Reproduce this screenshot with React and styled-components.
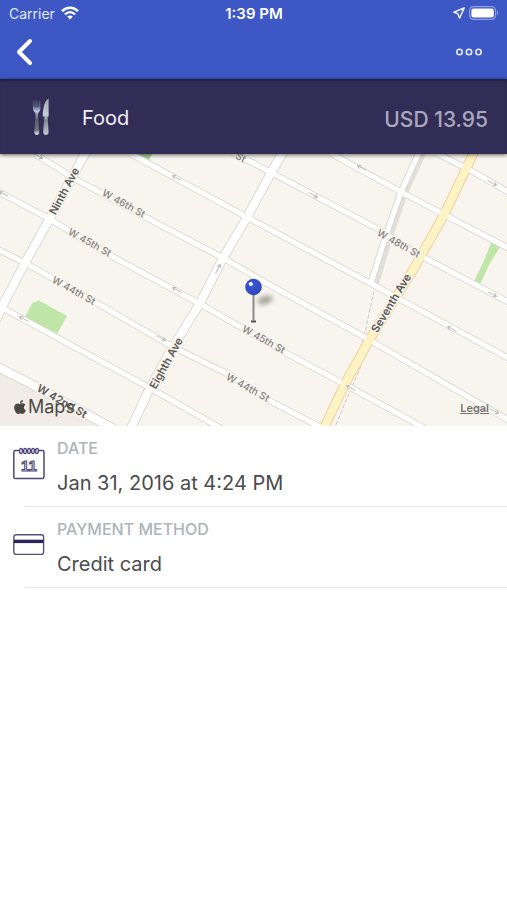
import React from "react";
import styled, { createGlobalStyle } from "styled-components";
import { FaApple } from "react-icons/fa";

const DETAILS = [
  { label: "Date", value: "Jan 31, 2016 at 4:24 PM", Icon: CalendarIcon },
  { label: "Payment method", value: "Credit card", Icon: CardIcon },
];

const STREETS = [
  "M438 154 L470 170 L510 193",
  "M332 154 L401 192 L445 215 L510 249",
  "M233 153 L253 163 L378 229 L423 257 L510 303",
  "M131 154 L243 215 L370 283 L510 359",
  "M35 154 L77 180 L147 218 L223 258 L268 284 L366 338 L510 421",
  "M-3 191 L48 218 L113 257 L202 305 L286 353 L346 385 L426 429",
  "M-3 249 L25 263 L97 303 L173 347 L230 375 L270 401 L324 429",
  "M-3 305 L150 388 L222 429",
];

const AVENUES = [
  "M86 152 L50 218 L25 263 L3 305 L-6 324",
  "M283 152 L271 173 L246 219 L223 258 L200 303 L173 347 L150 388 L130 430",
  "M-4 366 L33 385 L114 429",
];

const BROADWAY = "M420 150 L401 192 L385 238 L371 283";
const SEVENTH = "M475 150 L445 213 L413 270 L371 337 L346 382 L323 430";

const STREET_LABELS = [
  { x: 124, y: 203, text: "W 46th St" },
  { x: 90, y: 242, text: "W 45th St" },
  { x: 74, y: 290, text: "W 44th St" },
  { x: 264, y: 339, text: "W 45th St" },
  { x: 248, y: 387, text: "W 44th St" },
  { x: 399, y: 243, text: "W 48th St" },
  { x: 241, y: 157, text: "St" },
];

const AVENUE_LABELS = [
  { x: 64, y: 191, angle: -62, text: "Ninth Ave" },
  { x: 166, y: 363, angle: -61, text: "Eighth Ave" },
  { x: 391, y: 303, angle: -59, text: "Seventh Ave" },
  { x: 62, y: 401, angle: 30, text: "W 42nd St" },
];

// one way markers, flip points them to the right
const ARROWS = [
  { x: 177, y: 178 },
  { x: 362, y: 168 },
  { x: 177, y: 290 },
  { x: 24, y: 319 },
  { x: 452, y: 329 },
  { x: 4, y: 194 },
  { x: 38, y: 156, flip: true },
  { x: 313, y: 195, flip: true },
  { x: 492, y: 183, flip: true },
  { x: 161, y: 338, flip: true },
  { x: 351, y: 388 },
  { x: 492, y: 294, flip: true },
  { x: 494, y: 411, flip: true },
];

export default function App() {
  return (
    <>
      <GlobalStyle />
      <Header>
        <StatusBar>
          <Carrier>
            Carrier
            <WifiIcon />
          </Carrier>
          <Clock>1:39 PM</Clock>
          <StatusIcons>
            <LocationIcon />
            <BatteryIcon />
          </StatusIcons>
        </StatusBar>
        <NavBar>
          <NavButton type="button" aria-label="Back">
            <svg width="17" height="28" viewBox="0 0 17 28" fill="none">
              <path
                d="M14 3 L3 14 L14 25"
                stroke="#fff"
                strokeWidth="4"
                strokeLinecap="round"
                strokeLinejoin="round"
              />
            </svg>
          </NavButton>
          <NavButton type="button" aria-label="More options">
            <svg width="28" height="8" viewBox="0 0 28 8" fill="none">
              <g stroke="#e3e9ff" strokeWidth="1.6">
                <circle cx="4.5" cy="4" r="2.7" />
                <circle cx="14" cy="4" r="2.7" />
                <circle cx="23.5" cy="4" r="2.7" />
              </g>
            </svg>
          </NavButton>
        </NavBar>
      </Header>
      <main>
        <Summary>
          <CutleryIcon />
          <Category>Food</Category>
          <Amount>USD 13.95</Amount>
        </Summary>
        <MapPanel>
          <StreetMap />
          <MapBrand>
            <FaApple size={16} />
            Maps
          </MapBrand>
          <LegalLink href="#legal">Legal</LegalLink>
        </MapPanel>
        {DETAILS.map(({ label, value, Icon }) => (
          <React.Fragment key={label}>
            <DetailRow>
              <Icon />
              <div>
                <DetailLabel>{label}</DetailLabel>
                <DetailValue>{value}</DetailValue>
              </div>
            </DetailRow>
            <Divider />
          </React.Fragment>
        ))}
      </main>
    </>
  );
}

function StreetMap() {
  return (
    <MapCanvas viewBox="0 154 507 272" preserveAspectRatio="xMidYMid slice">
      <defs>
        <radialGradient id="pinHead" cx="0.4" cy="0.35" r="0.7">
          <stop offset="0" stopColor="#3f5ad2" />
          <stop offset="1" stopColor="#2b46bd" />
        </radialGradient>
        <filter id="soft" x="-50%" y="-50%" width="200%" height="200%">
          <feGaussianBlur stdDeviation="2.6" />
        </filter>
      </defs>
      <rect x="-10" y="140" width="530" height="300" fill="#f8f5ee" />
      <path d="M-4 366 L33 385 L114 429 L-4 429 Z" fill="#f1ede6" />
      <path d="M25 317 L33 302 L36 302 L38 300 L67 316 L57 334 Z" fill="#bfe5a8" />
      <path d="M491 243 L500 247 L490 263 L480 284 L474 281 L483 263 Z" fill="#bfe5a8" />
      <path d="M138 154 L152 154 L149 160 Z" fill="#a9cf92" />

      <g fill="none" stroke="#c9c7c2" strokeWidth="1" strokeDasharray="4 2">
        <path d="M374 291 L365 332 L361 345" />
        <path d="M361 366 L348 396 L335 427" />
      </g>
      <path d="M425 150 L405 194 L390 238 L376 285" fill="none" stroke="#e0ded8" strokeWidth="5" />

      <g fill="none" strokeLinejoin="round">
        <g stroke="#dcdad5" strokeWidth="7">
          {STREETS.map((d) => (
            <path key={d} d={d} />
          ))}
          <path d={BROADWAY} />
        </g>
        <g stroke="#dcdad5" strokeWidth="10">
          {AVENUES.map((d) => (
            <path key={d} d={d} />
          ))}
        </g>
        <path d={SEVENTH} stroke="#f5cfa0" strokeWidth="10" />
        <g stroke="#fff" strokeWidth="5">
          {STREETS.map((d) => (
            <path key={d} d={d} />
          ))}
          <path d={BROADWAY} />
        </g>
        <g stroke="#fff" strokeWidth="8">
          {AVENUES.map((d) => (
            <path key={d} d={d} />
          ))}
        </g>
        <path d={SEVENTH} stroke="#fdf3c4" strokeWidth="8" />
      </g>

      <g fill="none" stroke="#bab8b4" strokeWidth="1">
        {ARROWS.map(({ x, y, flip }) => (
          <path
            key={`${x}-${y}`}
            d="M5 0 H-5 M-2 -2 L-5 0 L-2 2"
            transform={`translate(${x} ${y}) rotate(${flip ? 208 : 28})`}
          />
        ))}
        <path d="M0 5 V-5 M-2 -2 L0 -5 L2 -2" transform="translate(218 269) rotate(28)" />
      </g>

      {STREET_LABELS.map(({ x, y, text }) => (
        <StreetLabel key={`${x}-${y}`} transform={`translate(${x} ${y}) rotate(29)`} y="4">
          {text}
        </StreetLabel>
      ))}
      {AVENUE_LABELS.map(({ x, y, angle, text }) => (
        <AvenueLabel key={text} transform={`translate(${x} ${y}) rotate(${angle})`} y="4">
          {text}
        </AvenueLabel>
      ))}

      <ellipse
        cx="265"
        cy="300"
        rx="8"
        ry="4"
        fill="#77746e"
        opacity="0.65"
        transform="rotate(-18 265 300)"
        filter="url(#soft)"
      />
      <path d="M251 321.5 H256" stroke="#55524f" strokeWidth="2" />
      <path d="M253.5 294 V321" stroke="#8d8b89" strokeWidth="2" />
      <circle cx="253.5" cy="287" r="8.3" fill="url(#pinHead)" />
      <circle cx="250.8" cy="284" r="2" fill="#fff" />
    </MapCanvas>
  );
}

function WifiIcon() {
  return (
    <svg width="18" height="14" viewBox="0 0 18 14" fill="none" stroke="#fff">
      <path d="M1 5.2 C5.5 0.6 12.5 0.6 17 5.2" strokeWidth="2.6" />
      <path d="M4 8.4 C7 5.5 11 5.5 14 8.4" strokeWidth="2.4" />
      <path d="M9 13.4 L6.2 10.6 C7.8 9.2 10.2 9.2 11.8 10.6 Z" fill="#fff" stroke="none" />
    </svg>
  );
}

function LocationIcon() {
  return (
    <svg width="12" height="12" viewBox="0 0 12 12" fill="none">
      <path
        d="M11.2 0.9 L0.9 5.2 L4.8 6.6 L6.6 11 Z"
        stroke="#eef1ff"
        strokeWidth="1.5"
        strokeLinejoin="round"
      />
    </svg>
  );
}

function BatteryIcon() {
  return (
    <svg width="30" height="14" viewBox="0 0 30 14" fill="none">
      <rect x="0.6" y="0.6" width="26" height="12.8" rx="4" stroke="#8f9ee3" strokeWidth="1.2" />
      <rect x="2.4" y="2.4" width="22.4" height="9.2" rx="2" fill="#fff" />
      <path d="M28 4.8 C29.8 5.6 29.8 8.4 28 9.2 Z" fill="#8f9ee3" />
    </svg>
  );
}

function CutleryIcon() {
  return (
    <svg width="18" height="38" viewBox="0 0 18 38">
      <defs>
        <linearGradient id="fork" x1="0" y1="0" x2="0" y2="1">
          <stop offset="0" stopColor="#4c4a66" />
          <stop offset="0.2" stopColor="#68708c" />
          <stop offset="0.32" stopColor="#b5cbe6" />
          <stop offset="0.55" stopColor="#5b5a6b" />
          <stop offset="0.85" stopColor="#6f6e7a" />
          <stop offset="1" stopColor="#eceef2" />
        </linearGradient>
        <linearGradient id="knife" x1="0" y1="0" x2="0" y2="1">
          <stop offset="0" stopColor="#a3a9b5" />
          <stop offset="0.45" stopColor="#c1ced9" />
          <stop offset="0.6" stopColor="#81858f" />
          <stop offset="1" stopColor="#c5cbd2" />
        </linearGradient>
      </defs>
      <path
        d="M1 2 L2 2 L2.6 9 L3.4 9 L3.7 2 L5.3 2 L5.6 9 L6.4 9 L7 2 L8.2 2 L8.6 10 C8.6 13 6.4 14 6 16 L7.3 34 C7.3 38 2.3 38 2.3 34 L3.6 16 C3.2 14 0.8 13 0.8 10 Z"
        fill="url(#fork)"
      />
      <path
        d="M16.6 0.6 C13 2.6 11 8 10.7 18.5 H12.4 L11.2 34 C11 38 16.8 38 16.6 34 L15.6 18.5 H16.6 Z"
        fill="url(#knife)"
      />
    </svg>
  );
}

function CalendarIcon() {
  return (
    <svg width="32" height="34" viewBox="0 0 32 34" fill="none" stroke="#4d4779">
      <rect x="0.8" y="3.6" width="30.2" height="28" rx="1.6" strokeWidth="1.5" />
      {[8, 12, 16, 20, 24].map((x) => (
        <ellipse key={x} cx={x} cy="4" rx="1.5" ry="2.7" fill="#d5d3e3" strokeWidth="1.2" />
      ))}
      <CalendarDay x="16" y="24">
        11
      </CalendarDay>
    </svg>
  );
}

function CardIcon() {
  return (
    <svg width="32" height="22" viewBox="0 0 32 22" fill="none">
      <rect x="0.8" y="0.8" width="29.8" height="19.6" rx="2.4" stroke="#57517f" strokeWidth="1.4" />
      <path d="M1 7.4 H30.4" stroke="#2b2458" strokeWidth="3.4" />
    </svg>
  );
}

const GlobalStyle = createGlobalStyle`
  * {
    box-sizing: border-box;
  }
  body {
    margin: 0;
    background: #fff;
    font-family: Inter, "Liberation Sans", sans-serif;
  }
  svg {
    display: block;
    flex-shrink: 0;
  }
`;

const Header = styled.header`
  background: #3d57c4;
  color: #fff;
`;

const StatusBar = styled.div`
  display: grid;
  grid-template-columns: 1fr auto 1fr;
  align-items: center;
  height: 26px;
  padding: 0 8px 0 9px;
  font-size: 14px;
`;

const Carrier = styled.div`
  display: flex;
  align-items: center;
  gap: 6px;
  color: #e3e9ff;
`;

const Clock = styled.time`
  font-size: 15px;
  font-weight: 600;
`;

const StatusIcons = styled.div`
  display: flex;
  align-items: center;
  justify-content: flex-end;
  gap: 4px;
`;

const NavBar = styled.nav`
  display: flex;
  align-items: center;
  justify-content: space-between;
  height: 53px;
  padding: 0 24px 2px 16px;
`;

const NavButton = styled.button`
  display: flex;
  align-items: center;
  height: 44px;
  padding: 0;
  border: 0;
  background: none;
  cursor: pointer;
`;

const Summary = styled.section`
  position: relative;
  z-index: 1;
  display: flex;
  align-items: center;
  height: 75px;
  padding: 0 19px 0 32px;
  background: #322d56;
  box-shadow: 0 1px 4px rgba(0, 0, 0, 0.6), inset 0 3px 2px -1px rgba(20, 16, 50, 0.5);
`;

const Category = styled.h1`
  margin: 0 0 0 32px;
  padding-top: 2px;
  color: #f1f0f6;
  font-size: 20px;
  font-weight: 400;
`;

const Amount = styled.span`
  margin-left: auto;
  padding-top: 6px;
  color: #aaa8bb;
  font-size: 21px;
  font-weight: 500;
`;

const MapPanel = styled.section`
  position: relative;
  height: 272px;
  overflow: hidden;
`;

const MapCanvas = styled.svg`
  width: 100%;
  height: 100%;
`;

const StreetLabel = styled.text`
  fill: #85827e;
  stroke: #f8f5ee;
  stroke-width: 3px;
  paint-order: stroke;
  font-size: 10px;
  font-weight: 500;
  text-anchor: middle;
`;

const AvenueLabel = styled(StreetLabel)`
  fill: #5a5855;
  font-size: 11px;
  font-weight: 600;
`;

const CalendarDay = styled.text`
  fill: #d5d3e3;
  stroke-width: 1px;
  font-family: "Liberation Sans", Arial, sans-serif;
  font-size: 15px;
  font-weight: 700;
  text-anchor: middle;
`;

const MapBrand = styled.div`
  position: absolute;
  left: 12px;
  bottom: 8px;
  display: flex;
  align-items: center;
  color: #4b4946;
  font-size: 18px;
  line-height: 22px;
`;

const LegalLink = styled.a`
  position: absolute;
  right: 18px;
  bottom: 11px;
  color: #75726e;
  font-size: 11px;
  font-weight: 600;
`;

const DetailRow = styled.section`
  display: flex;
  align-items: flex-start;
  gap: 12px;
  padding: 12px 13px 8px;

  > svg {
    height: 42px;
    margin-top: 5px;
  }
`;

const DetailLabel = styled.h2`
  margin: 0 0 10px;
  color: #aeb3bc;
  font-size: 16px;
  font-weight: 500;
  line-height: 20px;
  text-transform: uppercase;
`;

const DetailValue = styled.p`
  margin: 0;
  color: #4b4b4d;
  font-size: 20px;
  line-height: 30px;
`;

const Divider = styled.hr`
  height: 1px;
  margin: 0 0 0 25px;
  border: 0;
  background: #e4e6ea;
`;
